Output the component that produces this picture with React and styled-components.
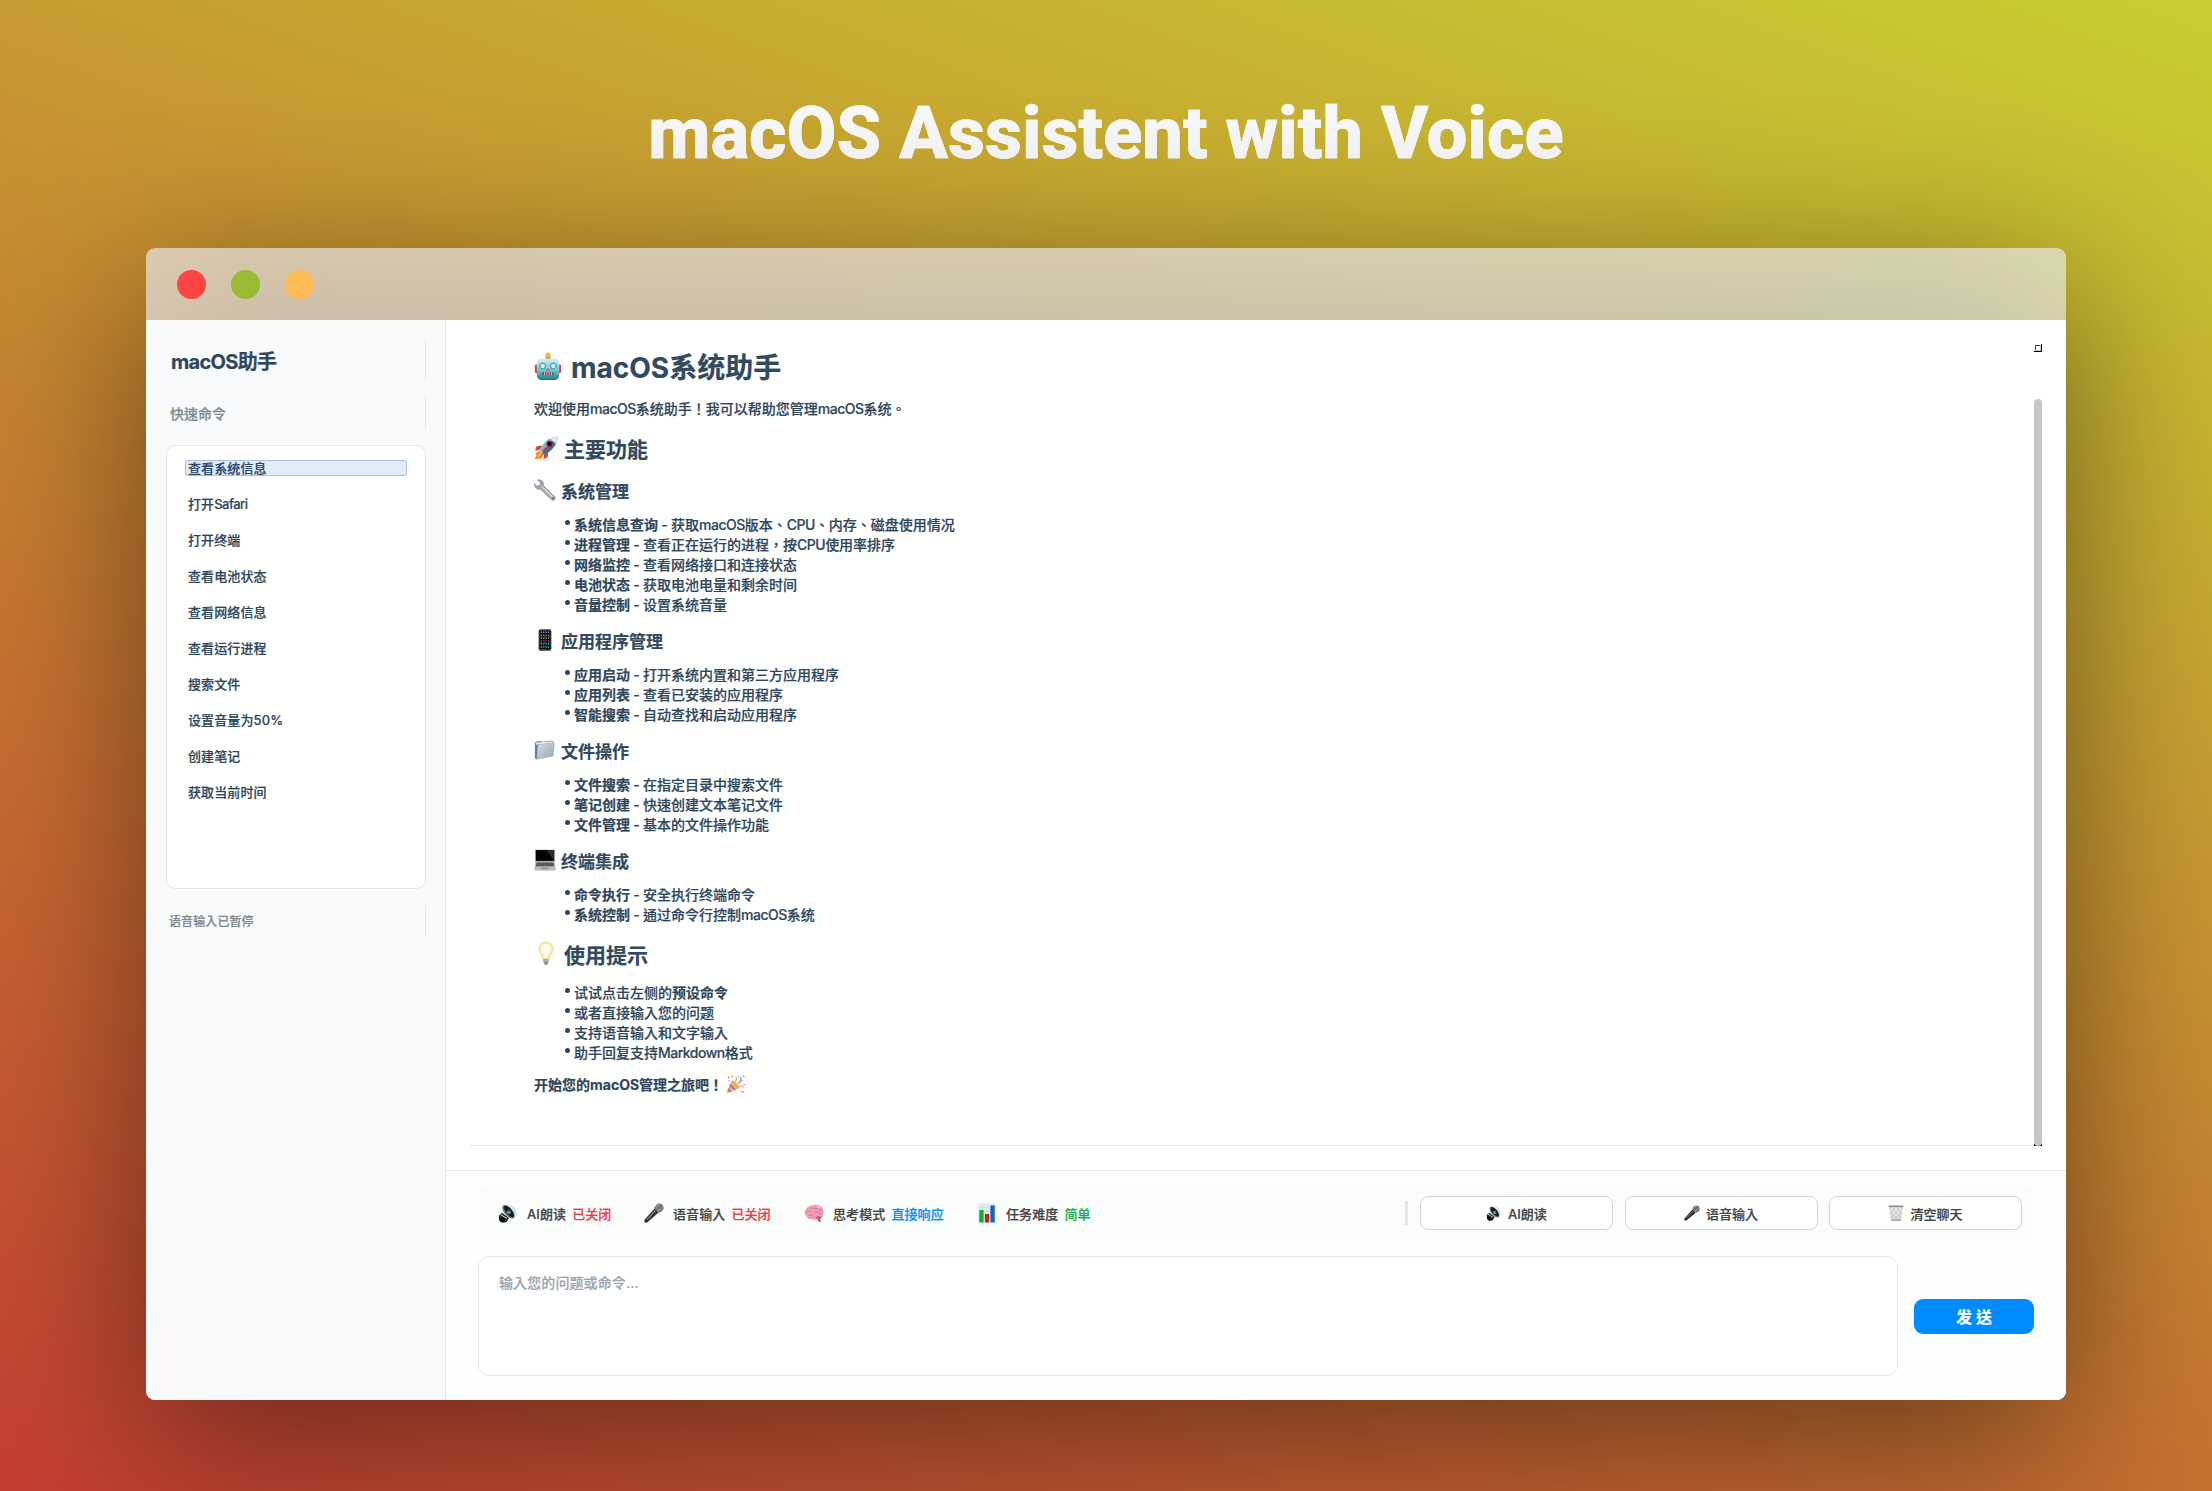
import React from 'react';
import styled, { createGlobalStyle } from 'styled-components';

const GlobalStyle = createGlobalStyle`
  *, *::before, *::after { box-sizing: border-box; }
  html, body { margin: 0; padding: 0; }
  body {
    font-family: Inter, "Noto Sans CJK TC", "Noto Sans CJK SC", sans-serif;
    font-weight: 500;
    color: #2f475c;
  }
  h1, h2, h3, p, ul { margin: 0; padding: 0; font: inherit; }
`;

const Backdrop = styled.div`
  position: relative;
  z-index: 0;
  width: 2212px;
  height: 1491px;
  overflow: hidden;
  display: flex;
  flex-direction: column;
  align-items: center;
  background: linear-gradient(20deg, #c43e32, #c8ce31);
`;

const Title = styled.h1`
  height: 248px;
  padding-top: 92px;
  font: 800 72px/84px Roboto, sans-serif;
  letter-spacing: 0.08px;
  white-space: nowrap;
  color: transparent;
  background: linear-gradient(#fbfbfb 92px, #eeeeee 176px);
  background-clip: text;
  -webkit-background-clip: text;
  -webkit-text-stroke: 0.6px #f4f4f4;
`;

const Window = styled.section`
  position: relative;
  width: 1920px;
  height: 1152px;
  display: flex;
  flex-direction: column;
  &::before {
    content: '';
    position: absolute;
    inset: 0;
    z-index: -1;
    background: rgba(0, 0, 0, 0.47);
    filter: blur(84px);
    transform: translateY(42px);
  }
`;

const TitleBar = styled.header`
  flex: none;
  height: 72px;
  display: flex;
  align-items: center;
  gap: 25px;
  padding-left: 30.5px;
  border-radius: 9px 9px 0 0;
  background: rgba(236, 236, 236, 0.67);
`;

const Dot = styled.span`
  width: 29px;
  height: 29px;
  border-radius: 50%;
  background: ${(p) => p.$color};
`;

const Body = styled.div`
  flex: 1;
  display: flex;
  border-radius: 0 0 9px 9px;
  overflow: hidden;
  background: #ffffff;
  -webkit-text-stroke: 0.2px;
`;

const Sidebar = styled.aside`
  width: 300px;
  padding: 20px 19px 0 20px;
  display: flex;
  flex-direction: column;
  gap: 16px;
  background: #f9fafc;
  border-right: 1px solid #e4e6e8;
`;

const SideLabel = styled.div`
  height: ${(p) => p.$h}px;
  padding-left: ${(p) => p.$pad}px;
  display: flex;
  align-items: center;
  border-right: 1px solid #e4e6e8;
  font-size: ${(p) => p.$size}px;
  font-weight: ${(p) => p.$weight || 500};
  letter-spacing: ${(p) => p.$track || 0}px;
  color: ${(p) => p.$color};
`;

const CommandList = styled.ul`
  height: 444px;
  padding: 14px 18px;
  list-style: none;
  background: #ffffff;
  border: 1px solid #e6e8ea;
  border-radius: 9px;
`;

const Command = styled.li`
  height: 16px;
  margin-bottom: 20px;
  padding-left: 2px;
  display: flex;
  align-items: center;
  font-size: 13px;
  line-height: 14px;
  letter-spacing: 0.1px;
  white-space: nowrap;
  border: 1px solid ${(p) => (p.$active ? '#a9bddd' : 'transparent')};
  border-radius: 2px;
  color: ${(p) => (p.$active ? '#28486f' : '#2f475c')};
  background: ${(p) => (p.$active ? '#e3ebf8' : 'transparent')};
`;

const Latin = styled.span`
  letter-spacing: -0.5px;
`;

const Main = styled.main`
  flex: 1;
  display: flex;
  flex-direction: column;
`;

const Chat = styled.div`
  flex: none;
  height: 826px;
  margin: 0 24px;
  display: flex;
  justify-content: space-between;
  border-bottom: 1px solid #e5e7e8;
`;

const Doc = styled.article`
  padding: 30px 0 0 64px;
  font-size: 14px;
`;

const Heading = styled.h2`
  height: ${(p) => p.$h}px;
  margin-top: ${(p) => p.$mt}px;
  display: flex;
  align-items: center;
  gap: ${(p) => p.$gap}px;
  font-size: ${(p) => p.$size}px;
  font-weight: 700;
  white-space: nowrap;
  color: #324a5f;
`;

const Para = styled.p`
  height: 20px;
  margin-top: ${(p) => p.$mt}px;
  display: flex;
  align-items: center;
  gap: 3px;
  font-weight: ${(p) => p.$weight || 500};
  white-space: nowrap;
`;

const List = styled.ul`
  margin-top: ${(p) => p.$mt}px;
  padding-left: 31px;
  list-style: none;
`;

const Item = styled.li`
  height: 20px;
  display: flex;
  align-items: center;
  white-space: nowrap;
  &::before {
    content: '';
    width: 5px;
    height: 5px;
    margin: -4px 4px 0 0;
    border-radius: 50%;
    background: #2f475c;
  }
  b { font-weight: 700; }
`;

const Dash = styled.span`
  width: 13px;
  text-align: center;
`;

const Scroll = styled.div`
  width: 8px;
  margin: 24px 0 -1px;
  display: flex;
  flex-direction: column;
  justify-content: space-between;
`;

const Thumb = styled.div`
  height: 747px;
  border-radius: 4px;
  background: #c6c6c6;
`;

const ThumbTrack = styled.div`
  background: linear-gradient(transparent 745px, #111 745px);
`;

const Footer = styled.footer`
  flex: 1;
  margin-top: 24px;
  padding: 15px 32px 0;
  border-top: 1px solid #e5e7e8;
  background: #fefefe;
`;

const Toolbar = styled.div`
  height: 54px;
  padding: 0 12px 0 20px;
  display: flex;
  align-items: center;
  border-radius: 9px;
  background: #fbfdfd;
  font-size: 13px;
  color: #444444;
`;

const Status = styled.div`
  display: flex;
  align-items: center;
  width: ${(p) => p.$w}px;
  letter-spacing: 0.1px;
  white-space: nowrap;
`;

const StatusLabel = styled.span`
  margin: 0 6px 0 9px;
`;

const StatusValue = styled.span`
  color: ${(p) => p.$color};
`;

const Separator = styled.i`
  width: 3px;
  height: 24px;
  margin: 0 12px 0 auto;
  background: #e3e4e4;
`;

const ToolButton = styled.button`
  width: 193px;
  height: 34px;
  margin-left: ${(p) => p.$ml || 0}px;
  padding: 0;
  display: flex;
  align-items: center;
  justify-content: center;
  gap: 6px;
  font: inherit;
  color: #444444;
  background: #ffffff;
  border: 1px solid #d3d5d5;
  border-radius: 8px;
`;

const Composer = styled.div`
  margin-top: 16px;
  display: flex;
  align-items: center;
  justify-content: space-between;
`;

const Field = styled.div`
  width: 1420px;
  height: 120px;
  padding: 16px 20px;
  border: 1px solid #e4e6e8;
  border-radius: 12px;
  background: #ffffff;
  font-size: 14px;
  line-height: 20px;
  letter-spacing: 0.1px;
  color: #9da5ad;
`;

const Send = styled.button`
  width: 120px;
  height: 35px;
  padding: 0;
  border: 0;
  border-radius: 9px;
  background: #008cff;
  color: #ffffff;
  font: inherit;
  font-size: 16px;
  font-weight: 700;
`;

const Glyph = styled.svg`
  flex: none;
  display: block;
  width: ${(p) => p.$size}px;
  height: ${(p) => p.$size}px;
  transform: translateY(${(p) => p.$dy || 0}px);
`;

const drawings = {
  robot: (
    <>
      <defs><linearGradient id="rb" x2="0" y2="1"><stop offset="0" stopColor="#dceff0" /><stop offset=".5" stopColor="#8fc7cb" /><stop offset="1" stopColor="#127f8c" /></linearGradient></defs>
      <rect x=".6" y="9" width="2.4" height="6" rx="1" fill="#c64a45" />
      <rect x="17" y="9" width="2.4" height="6" rx="1" fill="#c64a45" />
      <path d="M8 5.2 8.6 3h2.8l.6 2.2z" fill="#e0703f" />
      <circle cx="10" cy="2.2" r="1.9" fill="#f2b53c" />
      <path d="M5 4.600h10q3 0 3 3.400v8q0 4-3.600 4H5.600Q2 20 2 16V8q0-3.400 3-3.400z" fill="url(#rb)" />
      <circle cx="6.200" cy="10" r="2.500" fill="#35b6d0" /><circle cx="6.200" cy="10" r="1.500" fill="#eafcff" />
      <circle cx="13.800" cy="10" r="2.500" fill="#35b6d0" /><circle cx="13.800" cy="10" r="1.500" fill="#eafcff" />
      <path d="m10 11.200 1.300 2H8.700z" fill="#d9534a" />
      <rect x="5.800" y="14.400" width="8.400" height="2.200" rx=".8" fill="#6b4a4a" />
      <path d="M7.500 14.400v2.200M9.200 14.400v2.200M10.900 14.400v2.200M12.600 14.400v2.200" stroke="#e6dede" strokeWidth=".6" />
    </>
  ),
  rocket: (
    <>
      <path d="M7 8 2.200 8.600.8 12l4.400-.3zM12 13l-.6 4.800L8 19.200l.3-4.400z" fill="#e2431f" />
      <path d="M4.500 12.500 1 15l1.200.8L.6 19.300l4-.8.8.9 2.600-3.800z" fill="#ff7a1c" />
      <path d="M4.800 14 2 18l4-2.200z" fill="#ffd93b" />
      <path d="M19.500.6q.4 5.900-4.500 10.400L8.800 16 4.200 11.400 9 5.200Q13.600.4 19.500.6z" fill="#8fb3cf" />
      <path d="M19.500.6q.4 5.900-4.500 10.400L8.800 16 6.500 13.700z" fill="#3d6f9e" />
      <path d="M19.500.6q-3.400-.1-6 1.300l4.700 4.700Q19.600 4 19.500.6z" fill="#dfe8ee" />
      <circle cx="13" cy="6.600" r="2.700" fill="#8d2a28" /><circle cx="13" cy="6.600" r="1.700" fill="#121218" />
      <path d="m10.500 9.500-3 3" stroke="#d23a2b" strokeWidth="1.500" />
    </>
  ),
  wrench: (
    <>
      <path d="M3.200.8 5.800 3.600 5 6 2.600 6.400.4 4Q0 7.400 2.600 8.900q1.600.8 3.100.3L16 19q1.400 1 2.700-.1 1.300-1.300.3-2.700L8.800 6.200Q9.300 3.900 7.800 2 5.900.2 3.200.8z" fill="#a4a9b0" stroke="#858b93" strokeWidth=".5" />
      <path d="m7.500 7.200 9.800 9.600" stroke="#dde0e4" strokeWidth="1.200" />
      <circle cx="17.300" cy="17.300" r=".9" fill="#6e6063" />
    </>
  ),
  phone: (
    <>
      <rect x="4.200" y=".2" width="11.600" height="19.600" rx="1.600" fill="#3a3d3d" />
      <rect x="5.200" y="1.800" width="9.600" height="16.400" fill="#050607" />
      {[['#d96bc0', 3], ['#3fa66b', 5.6], ['#c78a3a', 8.2], ['#bb4868', 10.8], ['#47a3d8', 13.4], ['#2bd08b', 16.4]].map(([c, y]) => (
        <path key={y} d={`M6 ${y}h8`} stroke={c} strokeWidth="1.300" strokeDasharray="1.300 .9" />
      ))}
      <path d="M6 6.900h8M6 12.100h8" stroke="#2976b4" strokeWidth=".9" strokeDasharray="1.200 2.200" />
    </>
  ),
  folder: (
    <>
      <defs><linearGradient id="fd" x2="1" y2="1"><stop offset="0" stopColor="#d9dfe4" /><stop offset="1" stopColor="#97a3ae" /></linearGradient></defs>
      <path d="M.8 3.600 1.600 2.400 6.600 1.800 7.600 2.600 16.500 1.400 17.600 2.500V5L2.500 18.600.8 17.500z" fill="#71818e" />
      <path d="M1.400 3.400 16.800 2v1.400L2 5.200z" fill="#e7ecef" />
      <path d="M3.600 5.200 18.400 3.200q.6 0 .5.700l-1.200 11.700-15.300 3.200z" fill="url(#fd)" />
    </>
  ),
  laptop: (
    <>
      <path d="M1.500.6h17q.6 0 .6.700L19 11.500H1L.9 1.300q0-.7.600-.7z" fill="#8e9091" />
      <path d="M1.800 1h16.400v9.800H1.800z" fill="#020303" />
      <path d="M11.500 1h6.700v9.800z" fill="#2a2c2d" />
      <path d="M1.400 11.500h17.200l1.200 7q0 1-.8 1H1q-.9 0-.8-1z" fill="#b9baba" />
      <path d="M2.300 12.200h15.400l.6 3.500H1.700z" fill="#55585a" />
      <path d="M7 16.500h6l.3 2.200H6.700z" fill="#999b9c" />
    </>
  ),
  bulb: (
    <>
      <path d="M10 .6q5.600.4 6 6 0 2.700-1.900 5-1.300 1.700-1.400 3.600H7.300q0-1.900-1.400-3.600-1.900-2.300-1.900-5 .4-5.600 6-6z" fill="#fbe9ad" stroke="#f1d894" strokeWidth=".6" />
      <path d="M10 2.600q3.700.3 4 4 0 2-1.500 3.800-1 1.400-1 3.400h-3q0-2-1-3.400Q6 8.600 6 6.600q.3-3.700 4-4z" fill="#fffbe8" />
      <path d="M7.800 15.200h4.400v2.400L11 19.700H9l-1.200-2.100z" fill="#8d8f90" />
      <path d="M7.800 16.600h4.400" stroke="#d7d7d2" strokeWidth=".7" />
    </>
  ),
  party: (
    <>
      <path d="m5.800 6.200 7.900 7.600L.8 19.400q-.6 0-.4-.7z" fill="#f5bd3c" />
      <path d="m4.500 9.200 6.200 6-2.200 1-5.200-4.600zM2.400 13.800l3.800 3.600-2.200.9-2.400-2.300z" fill="#b86bc9" />
      <ellipse cx="9.800" cy="10" rx="1.900" ry="5.500" transform="rotate(-45 9.800 10)" fill="#e9b24e" />
      <path d="M9 8q3-3 1.400-6.800M12.800 12q3.400-1.500 6.400 1.300" fill="none" stroke="#f0a0ae" strokeWidth="1.200" />
      <path d="M12 10.500q1.500-4.800 6.200-4.300" fill="none" stroke="#f3c257" strokeWidth="1.300" />
      <path d="M13.500 8.500q3-2.300 2-6.500" fill="none" stroke="#57a7df" strokeWidth="1.300" />
      <path d="m2 2 1.600 1.400M6 .8l.6 1.700M18 .8l1.400 1.400M18.500 9.500l1 1M16 17l1.300 1.200" stroke="#e8566f" strokeWidth="1.300" />
      <path d="M2.500 6h1.600M13 .8l.5 1.400M18.500 17v1.500" stroke="#6fb35a" strokeWidth="1.200" />
    </>
  ),
  speaker: (
    <>
      <path d="M10 1.500Q17 1 19.500 12l-4 2z" fill="#d4eef5" />
      <path d="M12.500 2.500q4.300 3 5.500 8.500" fill="none" stroke="#a9dbe8" strokeWidth=".8" />
      <path d="M1 12.500 4 9.800l7 5.200-2.500 4Q5.500 20.400 3 19q-2.700-2.400-2-6.500z" fill="#23292d" />
      <circle cx="4" cy="16.600" r="2.700" fill="#0e1113" />
      <path d="M2.500 11.500 9 15.500" stroke="#dfe6e8" strokeWidth="1" />
      <ellipse cx="10.500" cy="8.800" rx="4" ry="8.200" transform="rotate(-40 10.500 8.800)" fill="#5f6c72" />
      <ellipse cx="11" cy="8.400" rx="2.800" ry="6.900" transform="rotate(-40 11 8.400)" fill="#171c1f" />
      <circle cx="10.800" cy="9.300" r="2" fill="#6a8b95" />
    </>
  ),
  mic: (
    <>
      <path d="m10.600 5.600 4 4L3.400 19.200q-1.600 1-2.600 0-.8-1 0-2.600z" fill="#2f2f31" />
      <path d="M11.500 7.500 3 16.500" stroke="#89898b" strokeWidth="1.100" />
      <path d="m10.200 5 5 4.800 1.400-1.300-5-5z" fill="#4a4a4c" />
      <circle cx="15.400" cy="4.800" r="4.200" fill="#77787a" />
      <path d="M12.300 4.500q.9-2.700 3.500-3M13.800 7.500q3.600-.6 4.300-4" stroke="#bdbdbf" strokeWidth=".9" fill="none" />
      <path d="m12.500 2.800 4.700 5M14.500 1.300l4.500 4.500" stroke="#4d4e50" strokeWidth=".6" />
    </>
  ),
  brain: (
    <>
      <path d="M13 14.500q.3 2.500 1.800 4.200.9.900 1.900 0l-.8-5z" fill="#b84f6a" />
      <path d="M10.500 1.800q6.500-.3 8.600 4.600 1.600 4.600-.8 7.600-2.300 2.600-5.600 1.900-2 1.700-5 .1-4.400.3-5.600-3.100Q-.6 9.800 1.800 6.500q2.400-4.500 8.700-4.700z" fill="#ee9db2" />
      <path d="M2.600 9.500q2-2.500 4.600-1M6 5.200q2.500-1.600 4 .6 2.400-1.600 3.800.8M10 9.500q2.800-1.600 4.600.8 2-.8 3 .8M5 12.600q2.500-1.400 4.300.4M16 5.600q-1 2 1.200 3" fill="none" stroke="#cf6d88" strokeWidth=".8" />
      <path d="M5.500 4q2-1.400 4.400-1.300M13 3.500q2 .3 3 1.300" fill="none" stroke="#fbd3dc" strokeWidth="1" />
      <path d="M11.500 14.200q3.400-1.700 6.300-.2-1.400 3-4.400 2.400z" fill="#c9556f" />
    </>
  ),
  chart: (
    <>
      <rect x="1.500" y=".5" width="17" height="19" fill="#dfe8ef" />
      <path d="M1.500 4.500h17M1.500 8.500h17M1.500 12.500h17M1.500 16.500h17" stroke="#cdd7de" strokeWidth=".5" />
      <rect x="2.300" y="7" width="4.300" height="12.500" fill="#0fae36" />
      <rect x="7.900" y="11" width="4.300" height="8.500" fill="#c32618" />
      <rect x="13.400" y="2.500" width="4.300" height="17" fill="#1263bd" />
    </>
  ),
  trash: (
    <>
      <path d="M1.200 1h17.600L16.400 19.200q-.2.800-1 .8H4.600q-.8 0-1-.8z" fill="#cdd1d3" />
      <path d="m3 4 12 14M8 3.500 16.500 14M13.500 3.500 17 8M17 4 5 18M12 3.500 3.600 13.500M6.500 3.500 3 7.500" stroke="#f6f7f8" strokeWidth=".9" />
      <path d="M.8.500h18.400v2H.8z" fill="#8f9498" /><path d="M3.800 18h12.400l-.3 2H4.100z" fill="#a0a5a9" />
    </>
  ),
};

const Icon = ({ name, size, dy }) => (
  <Glyph viewBox="0 0 20 20" $size={size} $dy={dy} aria-hidden="true">{drawings[name]}</Glyph>
);

/* Tightens Latin runs inside Chinese text. */
const Mixed = ({ children }) => (
  <span>
    {children.split(/([A-Za-z]+)/).map((part, i) => (i % 2 ? <Latin key={i}>{part}</Latin> : part))}
  </span>
);

const commands = ['查看系统信息', '打开Safari', '打开终端', '查看电池状态', '查看网络信息', '查看运行进程', '搜索文件', '设置音量为50%', '创建笔记', '获取当前时间'];

const features = [
  { icon: 'wrench', title: '系统管理', mt: 20, items: [
    ['系统信息查询', '获取macOS版本、CPU、内存、磁盘使用情况'],
    ['进程管理', '查看正在运行的进程，按CPU使用率排序'],
    ['网络监控', '查看网络接口和连接状态'],
    ['电池状态', '获取电池电量和剩余时间'],
    ['音量控制', '设置系统音量'],
  ] },
  { icon: 'phone', title: '应用程序管理', mt: 16, items: [
    ['应用启动', '打开系统内置和第三方应用程序'],
    ['应用列表', '查看已安装的应用程序'],
    ['智能搜索', '自动查找和启动应用程序'],
  ] },
  { icon: 'folder', title: '文件操作', mt: 16, items: [
    ['文件搜索', '在指定目录中搜索文件'],
    ['笔记创建', '快速创建文本笔记文件'],
    ['文件管理', '基本的文件操作功能'],
  ] },
  { icon: 'laptop', title: '终端集成', mt: 16, items: [
    ['命令执行', '安全执行终端命令'],
    ['系统控制', '通过命令行控制macOS系统'],
  ] },
];

const statuses = [
  { icon: 'speaker', label: 'AI朗读', value: '已关闭', color: '#ee3b42', w: 146 },
  { icon: 'mic', label: '语音输入', value: '已关闭', color: '#ee3b42', w: 160 },
  { icon: 'brain', label: '思考模式', value: '直接响应', color: '#0a8fff', w: 173 },
  { icon: 'chart', label: '任务难度', value: '简单', color: '#17a84a', w: 120 },
];

export default function App() {
  return (
    <>
      <GlobalStyle />
      <Backdrop>
        <Title>macOS Assistent with Voice</Title>
        <Window>
          <TitleBar>
            <Dot $color="#ff4444" />
            <Dot $color="#99bb33" />
            <Dot $color="#ffbb55" />
          </TitleBar>
          <Body>
            <Sidebar>
              <SideLabel $h={40} $pad={5} $size={20} $weight={700} $track={-0.7} $color="#2f475c">macOS助手</SideLabel>
              <SideLabel $h={33} $pad={4} $size={14} $color="#7d898f">快速命令</SideLabel>
              <CommandList>
                {commands.map((c, i) => <Command key={c} $active={i === 0}><Mixed>{c}</Mixed></Command>)}
              </CommandList>
              <SideLabel $h={31} $pad={3} $size={12} $track={0.1} $color="#7d898f">语音输入已暂停</SideLabel>
            </Sidebar>
            <Main>
              <Chat>
                <Doc>
                  <Heading as="h1" $h={32} $mt={0} $gap={9} $size={28}>
                    <Icon name="robot" size={28} />macOS系统助手
                  </Heading>
                  <Para $mt={16}><Mixed>欢迎使用macOS系统助手！我可以帮助您管理macOS系统。</Mixed></Para>
                  <Heading $h={24} $mt={18} $gap={6} $size={21}><Icon name="rocket" size={24} />主要功能</Heading>
                  {features.map((f) => (
                    <React.Fragment key={f.title}>
                      <Heading as="h3" $h={20} $mt={f.mt} $gap={5} $size={17}><Icon name={f.icon} size={22} />{f.title}</Heading>
                      <List $mt={14}>
                        {f.items.map(([name, text]) => (
                          <Item key={name}><b>{name}</b><Dash>-</Dash><Mixed>{text}</Mixed></Item>
                        ))}
                      </List>
                    </React.Fragment>
                  ))}
                  <Heading $h={24} $mt={18} $gap={6} $size={21}><Icon name="bulb" size={24} dy={-1} />使用提示</Heading>
                  <List $mt={16}>
                    <Item>试试点击左侧的<b>预设命令</b></Item>
                    <Item>或者直接输入您的问题</Item>
                    <Item>支持语音输入和文字输入</Item>
                    <Item><Mixed>助手回复支持Markdown格式</Mixed></Item>
                  </List>
                  <Para $mt={12} $weight={700}>开始您的macOS管理之旅吧！<Icon name="party" size={19} /></Para>
                </Doc>
                <Scroll>
                  <svg width="8" height="8" viewBox="0 0 8 8" shapeRendering="crispEdges">
                    <path d="M7 0h1v8H0V7h7z" fill="#000" />
                    <path d="M1 1h5v1H2v4H1z" fill="#444" />
                    <path d="M6 1h1v6H1V6h5z" fill="#c8c8c8" />
                  </svg>
                  <ThumbTrack><Thumb /></ThumbTrack>
                </Scroll>
              </Chat>
              <Footer>
                <Toolbar>
                  {statuses.map((s) => (
                    <Status key={s.label} $w={s.w}>
                      <Icon name={s.icon} size={20} />
                      <StatusLabel>{s.label}</StatusLabel>
                      <StatusValue $color={s.color}>{s.value}</StatusValue>
                    </Status>
                  ))}
                  <Separator />
                  <ToolButton><Icon name="speaker" size={16} />AI朗读</ToolButton>
                  <ToolButton $ml={11.5}><Icon name="mic" size={16} />语音输入</ToolButton>
                  <ToolButton $ml={11.5}><Icon name="trash" size={16} />清空聊天</ToolButton>
                </Toolbar>
                <Composer>
                  <Field>输入您的问题或命令...</Field>
                  <Send>发 送</Send>
                </Composer>
              </Footer>
            </Main>
          </Body>
        </Window>
      </Backdrop>
    </>
  );
}
